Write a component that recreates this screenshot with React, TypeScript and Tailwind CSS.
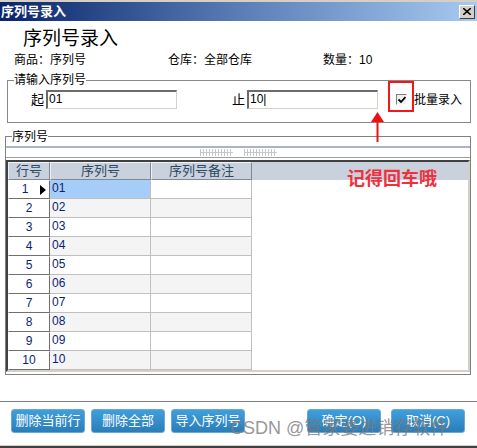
import React from 'react'

const FONT = { fontFamily: '"Liberation Sans", "Noto Sans CJK SC", sans-serif' }

const rows = ['01', '02', '03', '04', '05', '06', '07', '08', '09', '10']

function Grip() {
  return (
    <svg width="33" height="7" viewBox="0 0 33 7">
      {Array.from({ length: 11 }).map((_, i) => (
        <g key={i} stroke="#c8c8c8" strokeWidth="1">
          <line x1={i * 3 + 0.5} y1="0" x2={i * 3 + 0.5} y2="7" />
          <line x1={i * 3} y1="3.5" x2={i * 3 + 3} y2="3.5" />
        </g>
      ))}
    </svg>
  )
}

function SunkenInput({ value }: { value: string }) {
  return (
    <div className="w-[131px] h-[19px] border-t-2 border-l-2 border-t-[#6b6b6b] border-l-[#6b6b6b] border-r border-b border-r-[#d4d0c8] border-b-[#d4d0c8] bg-white text-[12px] leading-[15px] pl-[1px] text-black">
      {value}
    </div>
  )
}

function Button({ label }: { label: string }) {
  return (
    <div className="w-[74px] h-[24px] rounded-[3px] border border-[#6aa9d6] bg-gradient-to-b from-[#3f9fdc] to-[#2a7db9] text-white text-[13px] flex items-center justify-center">
      {label}
    </div>
  )
}

export default function App() {
  return (
    <div className="relative w-[477px] h-[448px] bg-white overflow-hidden flex flex-col text-black" style={FONT}>
      {/* title bar */}
      <div className="h-[21px] border-t-2 border-[#d4d0c8] bg-gradient-to-r from-[#0a246a] via-[#5a7db6] to-[#a6caf0] flex items-center pl-[1px] pr-[2px]">
        <span className="text-white font-bold text-[13px] leading-[15px]">序列号录入</span>
        <div className="ml-auto w-[16px] h-[14px] bg-[#d4d0c8] border border-t-white border-l-white border-r-[#404040] border-b-[#404040] flex items-center justify-center">
          <svg width="8" height="7" viewBox="0 0 8 7">
            <path d="M0 0 L8 7 M8 0 L0 7" stroke="#000" strokeWidth="1.6" />
          </svg>
        </div>
      </div>

      <div className="mt-[6px] pl-[23px] text-[19px] leading-[24px]">序列号录入</div>

      <div className="mt-[2px] pl-[14px] flex text-[12px] leading-[14px]">
        <div className="w-[154px]">商品：序列号</div>
        <div className="w-[155px]">仓库：全部仓库</div>
        <div>数量：10</div>
      </div>

      {/* input group */}
      <fieldset className="mt-[6px] ml-[7px] w-[464px] border border-[#888888] pb-[12px]">
        <legend className="ml-[6px] text-[12px] leading-[14px] px-0">请输入序列号</legend>
        <div className="mt-[3px] flex items-center text-[12px]">
          <span className="ml-[23px] w-[15px] text-[13px]">起</span>
          <SunkenInput value="01" />
          <span className="ml-[55px] w-[15px] text-[13px]">止</span>
          <SunkenInput value="10|" />
          <div className="ml-[18px] w-[11px] h-[11px] bg-[#f0f0f0] border border-t-[#808080] border-l-[#808080] border-r-white border-b-white flex items-center justify-center">
            <svg width="8" height="7" viewBox="0 0 8 7">
              <path d="M0.5 3.5 L3 6 L7.5 1" stroke="#000" strokeWidth="1.8" fill="none" />
            </svg>
          </div>
          <span className="ml-[7px] text-[12px]">批量录入</span>
        </div>
      </fieldset>

      {/* serial group */}
      <fieldset className="mt-[7px] ml-[5px] w-[466px] h-[245px] border border-[#808080] flex flex-col">
        <legend className="ml-[6px] text-[12px] leading-[14px] px-0">序列号</legend>
        <div className="mt-[2px] h-[2px] bg-[#a9b3c4]" />
        <div className="h-[9px] flex items-center">
          <div className="ml-[194px]"><Grip /></div>
          <div className="ml-[11px]"><Grip /></div>
        </div>
        <div className="h-px bg-[#a0a0a0]" />
        <div className="mt-[2px] flex-1 border-t-2 border-l-2 border-t-[#404040] border-l-[#404040] border-r-2 border-b-2 border-r-[#d4d0c8] border-b-[#d4d0c8] bg-white text-[12px]">
          <div className="flex h-[18px] bg-[#c9d1dc] text-[#2b4a66] text-[13px] leading-[16px]">
            <div className="w-[42px] border border-t-[#eef1f5] border-l-[#eef1f5] border-r-[#7f8894] border-b-[#7f8894] text-center">行号</div>
            <div className="w-[101px] border border-t-[#eef1f5] border-l-[#eef1f5] border-r-[#7f8894] border-b-[#7f8894] text-center">序列号</div>
            <div className="w-[101px] border border-t-[#eef1f5] border-l-[#eef1f5] border-r-[#7f8894] border-b-[#7f8894] text-center">序列号备注</div>
          </div>
          {rows.map((r, i) => (
            <div key={r} className="flex h-[19px] text-[#0b1f72] leading-[17px]">
              <div className="w-[42px] bg-white border border-t-white border-l-white border-r-[#707070] border-b-[#707070] relative text-center">
                <span className={i === 0 ? 'mr-[8px]' : ''}>{i + 1}</span>
                {i === 0 && (
                  <svg className="absolute right-[3px] top-[4px]" width="6" height="10" viewBox="0 0 6 10">
                    <path d="M0 0 L6 5 L0 10 Z" fill="#000" />
                  </svg>
                )}
              </div>
              <div className={`w-[101px] border-r border-b border-[#c0c0c0] pl-[2px] ${i === 0 ? 'bg-[#a6cdf7]' : i % 2 === 1 ? 'bg-[#f4f4f4]' : 'bg-white'}`}>
                {r}
              </div>
              <div className={`w-[101px] border-r border-b border-[#c0c0c0] ${i % 2 === 1 ? 'bg-[#f4f4f4]' : 'bg-white'}`} />
            </div>
          ))}
        </div>
      </fieldset>

      <div className="mt-[26px] h-px bg-[#808080]" />

      <div className="mt-[7px] flex pl-[11px]">
        <Button label="删除当前行" />
        <div className="ml-[6px]"><Button label="删除全部" /></div>
        <div className="ml-[6px]"><Button label="导入序列号" /></div>
        <div className="ml-[62px]"><Button label="确定(O)" /></div>
        <div className="ml-[10px]"><Button label="取消(C)" /></div>
      </div>

      <div className="mt-auto h-[3px] border-t border-[#d4d0c8] bg-[#404040]" />

      {/* annotations over the screenshot */}
      <div className="absolute left-[347px] top-[168px] text-[18px] leading-[22px] font-bold text-[#f0303c]">记得回车哦</div>
      <div className="absolute left-[388px] top-[81px] w-[26px] h-[31px] border-2 border-[#f01818]" />
      <svg className="absolute left-[370px] top-[112px]" width="15" height="30" viewBox="0 0 15 30">
        <path d="M7.5 0 L14 10 L1 10 Z" fill="#f01010" />
        <rect x="6.5" y="9" width="2" height="21" fill="#f01010" />
      </svg>
      <div className="absolute left-[230px] top-[416px] text-[18px] leading-[24px] text-[#7a7a7a]/80 whitespace-nowrap">
        CSDN @管家婆进销存软件
      </div>
    </div>
  )
}
